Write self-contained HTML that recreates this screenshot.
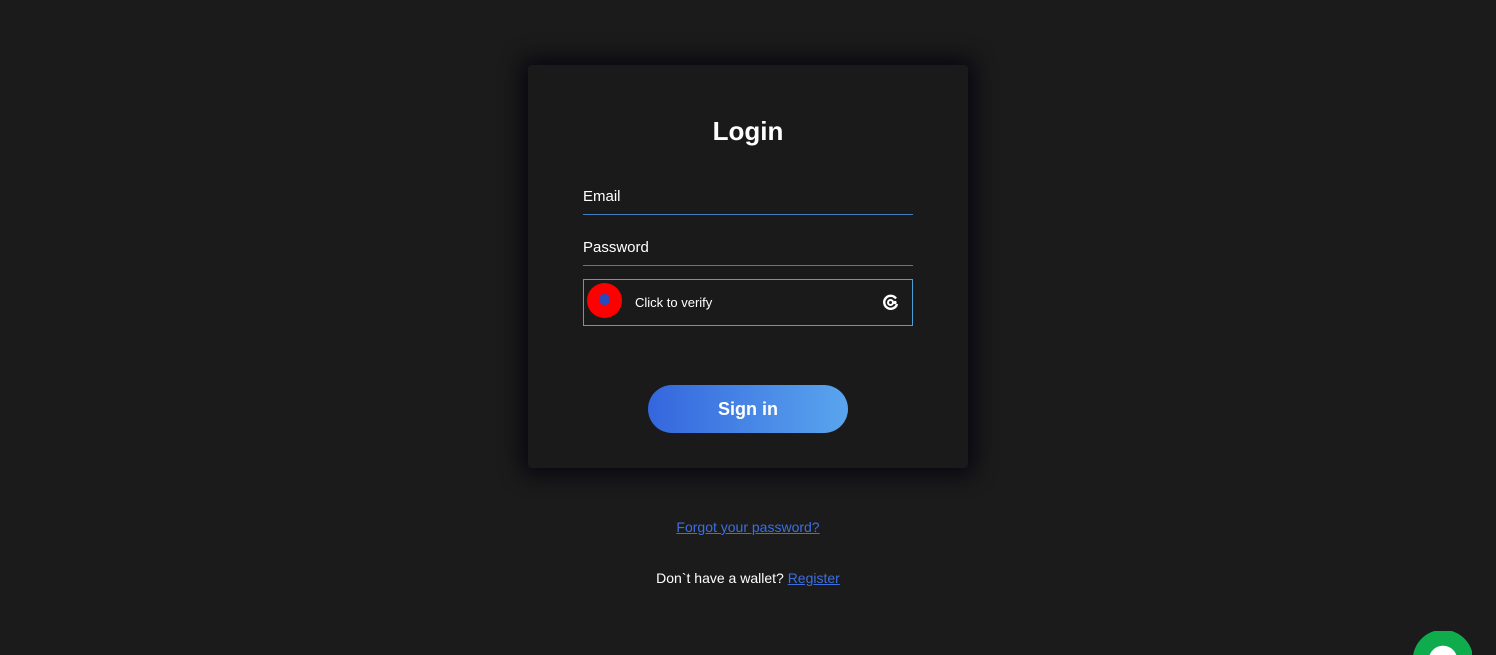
<!DOCTYPE html>
<html style="height:655px;overflow:hidden"><head><style>
body{margin:0;width:1496px;height:655px;background:#1b1b1b;font-family:"Liberation Sans",sans-serif;overflow:hidden;position:relative;color:#fff}
.card{position:absolute;left:528px;top:65px;width:440px;height:403px;background:#1a1a1a;border-radius:4px;box-shadow:0 0 22px 6px #07060f}
h1{position:absolute;top:115px;left:528px;width:440px;text-align:center;margin:0;font-size:26px;font-weight:bold;line-height:32px}
.f{position:absolute;left:583px;width:330px;border-bottom:1px solid #3f7dbf;font-size:15px;box-sizing:border-box;padding-top:2px}
.cap{position:absolute;left:583px;top:279px;width:328px;height:45px;border:1px solid #4a9fd8}
.btn{position:absolute;left:648px;top:385px;width:200px;height:48px;border-radius:24px;background:linear-gradient(90deg,#3466dd,#5aa5ee);text-align:center;line-height:48px;font-size:18px;font-weight:bold}
a{color:#3d6fe0;text-decoration:underline}
</style></head><body>
<div class="card"></div>
<h1>Login</h1>
<div class="f" style="top:186px;height:29px">Email</div>
<div class="f" style="top:237px;height:29px">Password</div>
<div class="cap">
<div style="position:absolute;left:3px;top:3px;width:35px;height:35px;border-radius:50%;background:#f00"></div>
<div style="position:absolute;left:15px;top:14px;width:11px;height:11px;border-radius:50%;background:#2a48c0"></div>
<div style="position:absolute;left:51px;top:15px;font-size:13px">Click to verify</div>
<svg style="position:absolute;left:298px;top:14px" width="17" height="17" viewBox="0 0 17 17"><path d="M14 4.5A6.5 6.5 0 1 0 15 10" stroke="#fff" stroke-width="2.4" fill="none"/><circle cx="8.5" cy="8.5" r="2.5" stroke="#fff" stroke-width="2" fill="none"/><circle cx="13" cy="8.5" r="1.6" fill="#fff"/></svg>
</div>
<div class="btn">Sign in</div>
<div style="position:absolute;top:519px;left:0;width:1496px;text-align:center;font-size:14px"><a>Forgot your password?</a></div>
<div style="position:absolute;top:570px;left:0;width:1496px;text-align:center;font-size:14px">Don`t have a wallet? <a>Register</a></div>
<div style="position:absolute;left:1412px;top:631px;width:60px;height:24px;background:radial-gradient(circle at 31px 29px,#fff 0 14px,#0fac4e 14.5px 30px,transparent 30.5px)"></div>
</body></html>
